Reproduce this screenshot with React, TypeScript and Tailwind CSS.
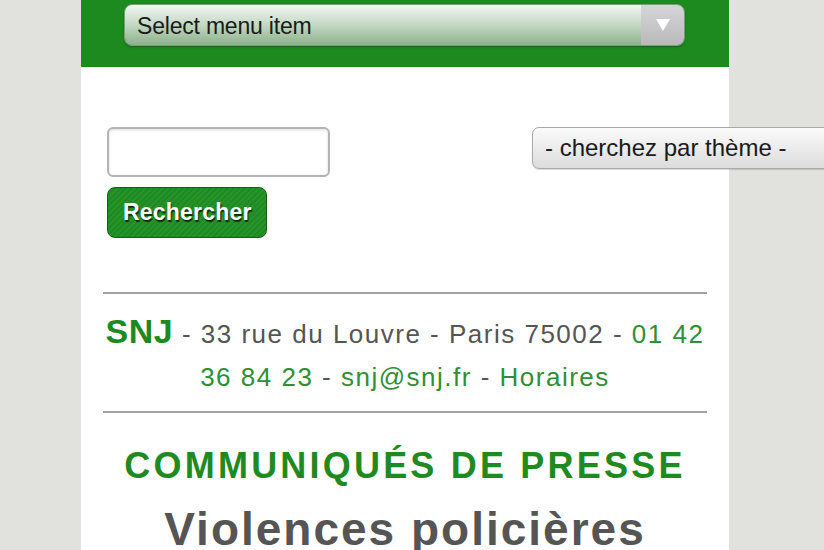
import React from "react";

const App = () => {
  return (
    <div className="h-[550px] w-full overflow-hidden bg-[#e1e1dd] font-['Liberation_Sans',Arial,sans-serif]">
      <div className="ml-[81px] w-[648px] bg-white min-h-[550px]">
        {/* top bar */}
        <div className="h-[67px] bg-[#1d8a1f] pt-[4px] px-[43px]">
          <div className="flex h-[42px] w-[561px] overflow-hidden rounded-[8px] border border-[#7a9d7a] shadow-[0_1px_2px_rgba(0,0,0,0.3)]">
            <div className="flex flex-1 items-center bg-linear-to-b from-[#f2f6f2] via-[#c3d8c3] to-[#8cb18c] pl-[12px] pt-[3px] text-[23px] tracking-[-0.2px] text-[#1a1a1a]">
              Select menu item
            </div>
            <div className="flex w-[43px] items-center justify-center bg-linear-to-b from-[#d6d6d8] to-[#b9b9bc]">
              <svg width="16" height="14" viewBox="0 0 16 14">
                <path d="M1 1 L15 1 L8 13 Z" fill="#ffffff" />
              </svg>
            </div>
          </div>
        </div>

        {/* search */}
        <div className="flex items-start gap-[202px] pl-[26px] pt-[60px]">
          <div className="flex shrink-0 flex-col gap-[10px]">
            <div className="h-[50px] w-[223px] rounded-[6px] border-2 border-[#b4b4b4] bg-white shadow-[inset_0_1px_3px_rgba(0,0,0,0.15)]" />
            <button className="h-[51px] w-[160px] rounded-[8px] border border-[#145f16] bg-[repeating-linear-gradient(135deg,#1f8a22_0px,#1f8a22_2px,#26932a_2px,#26932a_4px)] pl-[15px] text-left text-[23px] font-bold tracking-[0.2px] text-white [text-shadow:1px_2px_1px_#0b2e0b]">
              Rechercher
            </button>
          </div>
          <div className="flex h-[42px] w-[320px] shrink-0 items-center rounded-[7px] border border-[#a9a9a9] bg-linear-to-b from-[#fbfbfb] to-[#dcdcdc] pl-[12px] text-[24px] text-[#1a1a1a] shadow-[0_1px_1px_rgba(0,0,0,0.15)]">
            - cherchez par thème -
          </div>
        </div>

        {/* contact */}
        <div className="mx-[22px] mt-[54px] border-t-2 border-[#a3a3a3]" />
        <div className="px-[16px] pt-[16px] pb-[12px] text-center text-[26px] leading-[43px] tracking-[1.5px] text-[#555555]">
          <span className="text-[34px] font-bold tracking-[0.5px] text-[#1d8a1f]">SNJ</span>
          {" - 33 rue du Louvre - Paris 75002 - "}
          <span className="text-[#2f8f35]">01 42 36 84 23</span>
          {" - "}
          <span className="text-[#2f8f35]">snj@snj.fr</span>
          {" - "}
          <span className="text-[#2f8f35]">Horaires</span>
        </div>
        <div className="mx-[22px] border-t-2 border-[#a3a3a3]" />

        {/* press */}
        <div className="pt-[32px] text-center text-[36px] font-bold leading-[42px] tracking-[3.2px] text-[#1f8a22]">
          COMMUNIQUÉS DE PRESSE
        </div>
        <div className="pt-[15px] text-center text-[46px] font-bold leading-[54px] tracking-[2px] text-[#555555]">
          Violences policières
        </div>
      </div>
    </div>
  );
};

export default App;
